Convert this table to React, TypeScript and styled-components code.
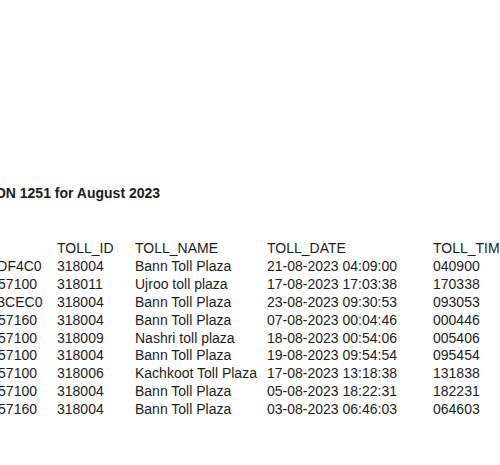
import React from "react";
import styled, { createGlobalStyle } from "styled-components";

const GlobalStyle = createGlobalStyle`
  html, body {
    margin: 0;
    padding: 0;
    background: #ffffff;
  }
`;

const Viewport = styled.div`
  width: 500px;
  height: 465px;
  overflow: hidden;
  background: #ffffff;
`;

const Sheet = styled.div`
  margin-left: -100px;
  padding-top: 185px;
  width: 760px;
  font-family: "Liberation Sans", Arial, sans-serif;
  font-size: 14px;
  color: #1c1c1c;
`;

const Title = styled.h1`
  margin: 0 0 39px 14px;
  font-size: 14px;
  line-height: 16px;
  font-weight: bold;
  white-space: nowrap;
`;

const Table = styled.div`
  display: flex;
  flex-direction: column;
`;

const Row = styled.div`
  display: grid;
  grid-template-columns: 157px 78px 132px 166px 120px;
  line-height: 17.9px;
  white-space: nowrap;
`;

const Cell = styled.span`
  overflow: visible;
`;

interface Toll {
  tag: string;
  id: string;
  name: string;
  date: string;
  time: string;
}

const rows: Toll[] = [
  { tag: "ED3008330001DF4C0", id: "318004", name: "Bann Toll Plaza", date: "21-08-2023 04:09:00", time: "040900" },
  { tag: "DD012345678957100", id: "318011", name: "Ujroo toll plaza", date: "17-08-2023 17:03:38", time: "170338" },
  { tag: "ED30083300013CEC0", id: "318004", name: "Bann Toll Plaza", date: "23-08-2023 09:30:53", time: "093053" },
  { tag: "DD012345678957160", id: "318004", name: "Bann Toll Plaza", date: "07-08-2023 00:04:46", time: "000446" },
  { tag: "DD012345678957100", id: "318009", name: "Nashri toll plaza", date: "18-08-2023 00:54:06", time: "005406" },
  { tag: "DD012345678957100", id: "318004", name: "Bann Toll Plaza", date: "19-08-2023 09:54:54", time: "095454" },
  { tag: "DD012345678957100", id: "318006", name: "Kachkoot Toll Plaza", date: "17-08-2023 13:18:38", time: "131838" },
  { tag: "DD012345678957100", id: "318004", name: "Bann Toll Plaza", date: "05-08-2023 18:22:31", time: "182231" },
  { tag: "DD012345678957160", id: "318004", name: "Bann Toll Plaza", date: "03-08-2023 06:46:03", time: "064603" },
];

export default function App(): JSX.Element {
  return (
    <>
      <GlobalStyle />
      <Viewport>
        <Sheet>
          <Title>TRANSACTION 1251 for August 2023</Title>
          <Table>
            <Row>
              <Cell></Cell>
              <Cell>TOLL_ID</Cell>
              <Cell>TOLL_NAME</Cell>
              <Cell>TOLL_DATE</Cell>
              <Cell>TOLL_TIME</Cell>
            </Row>
            {rows.map((r, i) => (
              <Row key={i}>
                <Cell>{r.tag}</Cell>
                <Cell>{r.id}</Cell>
                <Cell>{r.name}</Cell>
                <Cell>{r.date}</Cell>
                <Cell>{r.time}</Cell>
              </Row>
            ))}
          </Table>
        </Sheet>
      </Viewport>
    </>
  );
}
